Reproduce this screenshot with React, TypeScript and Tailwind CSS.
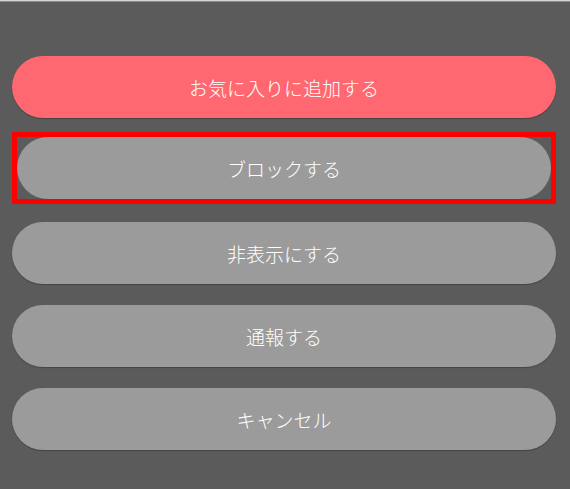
export default function App() {
  const font = { fontFamily: '"Noto Sans CJK JP", "Noto Sans", sans-serif' };
  const btn =
    "flex h-[62px] w-full items-center justify-center rounded-full pt-[2px] text-[19px] font-light text-white shadow-[0_1px_1px_rgba(0,0,0,0.25)]";
  return (
    <div className="h-[489px] w-[570px] bg-[#5b5b5b]" style={font}>
      <div className="h-[1px] bg-[#d6d6d6]" />
      <div className="h-[1px] bg-[#8a8a8a]" />
      <div className="flex flex-col gap-[21px] pl-[12px] pr-[14px] pt-[54px]">
        <div className={`${btn} bg-[#ff6870] text-[#fff2f2]`}>お気に入りに追加する</div>
        <div className="relative h-[62px]">
          <div className="absolute -top-[7px] -bottom-[3px] left-0 right-0 flex border-[5px] border-[#ff0000]">
            <div className={`${btn} h-full bg-[#9b9b9b] shadow-none`}>ブロックする</div>
          </div>
        </div>
        <div className={`${btn} bg-[#9b9b9b]`}>非表示にする</div>
        <div className={`${btn} bg-[#9b9b9b]`}>通報する</div>
        <div className={`${btn} bg-[#9b9b9b]`}>キャンセル</div>
      </div>
    </div>
  );
}
